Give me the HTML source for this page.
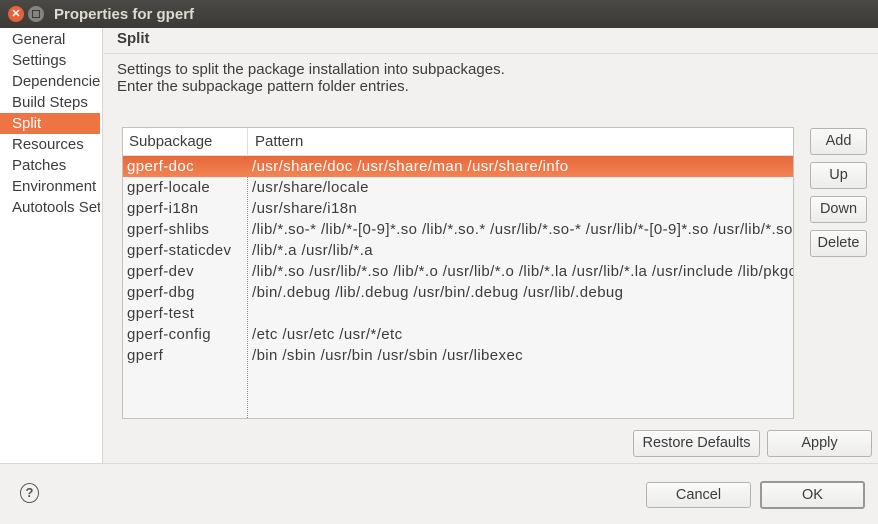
<!DOCTYPE html><html><head><style>
*{margin:0;padding:0;box-sizing:border-box}
body{width:878px;height:524px;background:#f2f1f0;font-family:"Liberation Sans",sans-serif;font-size:15px;color:#3c3c3c;position:relative;overflow:hidden}
.a{position:absolute}
.title{left:0;top:0;width:878px;height:28px;background:linear-gradient(#4a4945,#3b3a36);color:#dfdbd2;font-weight:bold;font-size:15px}
.btn{position:absolute;border:1px solid #b5b3ad;border-radius:3px;background:linear-gradient(#fafafa,#ececea);text-align:center;font-size:14.5px;color:#3c3c3c}
.tree div{height:21px;line-height:21px;padding-left:12px;white-space:nowrap;overflow:hidden;width:100px}
.row{position:absolute;left:123px;width:670px;height:21px;line-height:21px;white-space:nowrap;overflow:hidden;letter-spacing:0.4px}
.row span{position:absolute;left:4px}
.row b{font-weight:normal;position:absolute;left:129px}
</style></head><body>
<div class="a title"><div class="a" style="left:8px;top:6px;width:16px;height:16px;border-radius:50%;background:#e9603a;color:#fff;font-size:11px;line-height:16px;text-align:center">✕</div>
<div class="a" style="left:28px;top:6px;width:16px;height:16px;border-radius:50%;background:#86847e"><div class="a" style="left:4px;top:4px;width:8px;height:8px;border:1px solid #3b3a36"></div></div>
<div class="a" style="left:54px;top:6px">Properties for gperf</div></div>
<div class="a tree" style="left:0;top:28px;width:103px;height:435px;background:#fff;border-right:1px solid #d8d6d2;padding-top:1px">
<div>General</div><div>Settings</div><div>Dependencies</div><div>Build Steps</div><div style="background:#ee7543;color:#fff">Split</div><div>Resources</div><div>Patches</div><div>Environment</div><div>Autotools Settings</div></div>
<div class="a" style="left:104px;top:28px;width:774px;height:26px;border-bottom:1px solid #dcdad5;font-weight:bold;padding:2px 0 0 13px">Split</div>
<div class="a" style="left:117px;top:61px;line-height:17px">Settings to split the package installation into subpackages.<br>Enter the subpackage pattern folder entries.</div>
<div class="a" style="left:122px;top:127px;width:672px;height:292px;border:1px solid #c4c2bd;background:#f6f6f6">
<div class="a" style="left:0;top:0;width:670px;height:28px;background:#fff;border-bottom:1px solid #e0e0e0;line-height:28px"><span class="a" style="left:6px">Subpackage</span><span class="a" style="left:124px;top:0;height:28px;border-left:1px solid #ddd;padding-left:7px">Pattern</span></div>
<div class="a" style="left:124px;top:28px;height:262px;border-left:1px dotted #888"></div>
</div>
<div class="row" style="top:156px;background:linear-gradient(#e8683a,#f28455);color:#fff"><span>gperf-doc</span><b>/usr/share/doc /usr/share/man /usr/share/info</b></div>
<div class="row" style="top:177px"><span>gperf-locale</span><b>/usr/share/locale</b></div>
<div class="row" style="top:198px"><span>gperf-i18n</span><b>/usr/share/i18n</b></div>
<div class="row" style="top:219px"><span>gperf-shlibs</span><b>/lib/*.so-* /lib/*-[0-9]*.so /lib/*.so.* /usr/lib/*.so-* /usr/lib/*-[0-9]*.so /usr/lib/*.so.*</b></div>
<div class="row" style="top:240px"><span>gperf-staticdev</span><b>/lib/*.a /usr/lib/*.a</b></div>
<div class="row" style="top:261px"><span>gperf-dev</span><b>/lib/*.so /usr/lib/*.so /lib/*.o /usr/lib/*.o /lib/*.la /usr/lib/*.la /usr/include /lib/pkgconfig</b></div>
<div class="row" style="top:282px"><span>gperf-dbg</span><b>/bin/.debug /lib/.debug /usr/bin/.debug /usr/lib/.debug</b></div>
<div class="row" style="top:303px"><span>gperf-test</span><b></b></div>
<div class="row" style="top:324px"><span>gperf-config</span><b>/etc /usr/etc /usr/*/etc</b></div>
<div class="row" style="top:345px"><span>gperf</span><b>/bin /sbin /usr/bin /usr/sbin /usr/libexec</b></div>
<div class="btn" style="left:810px;top:128px;width:57px;height:27px;line-height:25px">Add</div>
<div class="btn" style="left:810px;top:162px;width:57px;height:27px;line-height:25px">Up</div>
<div class="btn" style="left:810px;top:196px;width:57px;height:27px;line-height:25px">Down</div>
<div class="btn" style="left:810px;top:230px;width:57px;height:27px;line-height:25px">Delete</div>
<div class="btn" style="left:633px;top:430px;width:127px;height:27px;line-height:25px">Restore Defaults</div>
<div class="btn" style="left:767px;top:430px;width:105px;height:27px;line-height:25px">Apply</div>
<div class="a" style="left:0;top:463px;width:878px;height:1px;background:#dcdad5"></div>
<div class="a" style="left:20px;top:483px;width:19px;height:20px;border:1.5px solid #555;border-radius:50%;text-align:center;line-height:17px;font-size:13px;font-weight:bold;color:#555">?</div>
<div class="btn" style="left:646px;top:482px;width:105px;height:26px;line-height:24px">Cancel</div>
<div class="btn" style="left:760px;top:481px;width:105px;height:28px;line-height:25px;border:2px solid #9a9893">OK</div>
</body></html>
